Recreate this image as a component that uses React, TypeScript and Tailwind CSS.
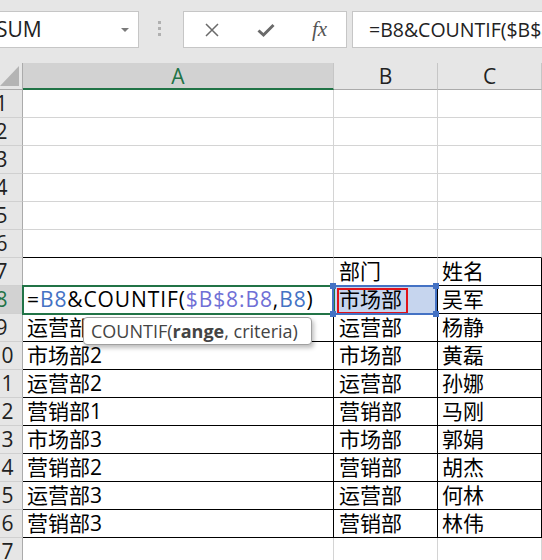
import { Fragment } from "react";

const FONT = { fontFamily: '"Open Sans", "Noto Sans CJK SC", sans-serif' };

const rows: [string, string, string][] = [
  ["", "", ""],
  ["", "", ""],
  ["", "", ""],
  ["", "", ""],
  ["", "", ""],
  ["", "", ""],
  ["", "部门", "姓名"],
  ["", "市场部", "吴军"],
  ["运营部1", "运营部", "杨静"],
  ["市场部2", "市场部", "黄磊"],
  ["运营部2", "运营部", "孙娜"],
  ["营销部1", "营销部", "马刚"],
  ["市场部3", "市场部", "郭娟"],
  ["营销部2", "营销部", "胡杰"],
  ["运营部3", "运营部", "何林"],
  ["营销部3", "营销部", "林伟"],
  ["", "", ""],
];

function Toolbar() {
  return (
    <div className="h-[63px] bg-[#e6e6e6] flex items-start pt-[11px] relative">
      <div className="ml-[-20px] w-[159px] h-[37px] bg-white border border-[#c6c6c6] flex items-center justify-between pl-[15px] pr-[9px]">
        <span className="text-[21px] text-[#222]">SUM</span>
        <span className="w-0 h-0 border-l-[4px] border-r-[4px] border-t-[4px] border-l-transparent border-r-transparent border-t-[#7a7a7a]" />
      </div>
      <div className="ml-[19px] mt-[10px] flex flex-col gap-[3px]">
        <span className="w-[3px] h-[3px] bg-[#b0b0b0]" />
        <span className="w-[3px] h-[3px] bg-[#b0b0b0]" />
        <span className="w-[3px] h-[3px] bg-[#b0b0b0]" />
      </div>
      <div className="ml-[22px] w-[164px] h-[37px] bg-white border border-[#c6c6c6] flex items-center">
        <svg className="ml-[20px]" width="16" height="16" viewBox="0 0 16 16">
          <path d="M2 2 L14 14 M14 2 L2 14" stroke="#6a6a6a" strokeWidth="1.5" />
        </svg>
        <svg className="ml-[37px]" width="18" height="16" viewBox="0 0 18 16">
          <path d="M1.5 8.5 L6.5 13 L16.5 3" stroke="#6a6a6a" strokeWidth="3" fill="none" />
        </svg>
        <span
          className="ml-[37px] text-[21px] italic text-[#555]"
          style={{ fontFamily: '"Liberation Serif", serif' }}
        >
          fx
        </span>
      </div>
      <div className="ml-[5px] flex-1 h-[37px] bg-white border border-[#c6c6c6] border-r-0 flex items-center pl-[16px] overflow-hidden whitespace-nowrap">
        <span className="text-[19.5px] text-[#222]">=B8&amp;COUNTIF($B$8:B8,B8)</span>
      </div>
    </div>
  );
}

function Formula() {
  return (
    <span className="tracking-[0.9px]">
      =<span className="text-[#4472c4]">B8</span>&amp;COUNTIF(
      <span className="text-[#6f6fd6]">$B$8:B8</span>,
      <span className="text-[#4472c4]">B8</span>)
    </span>
  );
}

export default function App() {
  return (
    <div className="w-[542px] h-[560px] overflow-hidden bg-white" style={FONT}>
      <Toolbar />
      {/* column headers */}
      <div className="flex h-[27px] bg-[#e6e6e6] text-[21px] leading-[26px]">
        <div className="w-[23px] border-r border-b border-[#ababab] relative">
          <svg className="absolute left-0 top-[3px]" width="20" height="21" viewBox="0 0 20 21">
            <polygon points="19,0 19,20 0,20" fill="#b4b4b4" />
          </svg>
        </div>
        <div className="w-[311px] bg-[#d2d2d2] border-b-2 border-[#217346] border-r border-r-[#c6c6c6] flex items-center justify-center text-[#217346]">
          A
        </div>
        <div className="w-[104px] border-b border-r border-[#ababab] border-r-[#c6c6c6] flex items-center justify-center text-[#222]">
          B
        </div>
        <div className="w-[104px] border-b border-r border-[#ababab] border-r-[#c6c6c6] flex items-center justify-center text-[#222]">
          C
        </div>
      </div>
      {/* grid */}
      {rows.map((r, i) => {
        const n = i + 1;
        const boxed = n >= 7 && n <= 16;
        const bottom = n >= 6 && n <= 16 ? "border-b-black" : "border-b-[#d4d4d4]";
        const rightA = n >= 8 && n <= 16 ? "border-r-black" : "border-r-[#d4d4d4]";
        const rightB = n >= 8 && n <= 16 ? "border-r-black" : "border-r-[#d4d4d4]";
        const rightC = boxed ? "border-r-black" : "border-r-[#d4d4d4]";
        const active = n === 8;
        return (
          <div key={n} className="flex h-[28px] text-[21px] leading-[27px]">
            <div
              className={`w-[23px] overflow-hidden border-r border-b border-r-[#ababab] border-b-[#d0d0d0] ${
                active ? "bg-[#d2d2d2] text-[#217346]" : "bg-[#e6e6e6] text-[#222]"
              }`}
            >
              <div className="w-[39px] ml-[-18px] text-center">{n}</div>
            </div>
            <div className={`w-[311px] border-r border-b ${rightA} ${bottom} relative flex items-end pl-[4px] text-black whitespace-nowrap`}>
              {active ? (
                <Fragment>
                  <Formula />
                  <div className="absolute -left-[1px] -top-[1px] -right-[2px] -bottom-[2px] border-2 border-[#217346] z-10" />
                  <div className="absolute left-[60px] top-[31px] w-[229px] h-[28px] bg-white border border-[#a0a0a0] rounded-[4px] shadow-[2px_3px_4px_rgba(0,0,0,0.25)] z-30 flex items-center pl-[7px] text-[18px] text-[#444] leading-none">
                    COUNTIF(<b className="font-bold">range</b>, criteria)
                  </div>
                </Fragment>
              ) : (
                r[0]
              )}
            </div>
            <div
              className={`w-[104px] border-r border-b ${rightB} ${bottom} relative flex items-end pl-[5px] text-black ${
                active ? "bg-[#c6d5ee]" : ""
              }`}
            >
              {r[1]}
              {active && (
                <Fragment>
                  <div className="absolute left-[3px] top-[2px] w-[71px] h-[26px] border-2 border-[#e0131a]" />
                  <div className="absolute -left-[2px] -top-[1px] right-0 -bottom-[2px] border-2 border-[#4472c4] z-20">
                    <span className="absolute -left-[4px] -top-[4px] w-[6px] h-[6px] bg-[#4472c4]" />
                    <span className="absolute -right-[4px] -top-[4px] w-[6px] h-[6px] bg-[#4472c4]" />
                    <span className="absolute -left-[4px] -bottom-[4px] w-[6px] h-[6px] bg-[#4472c4]" />
                    <span className="absolute -right-[4px] -bottom-[4px] w-[6px] h-[6px] bg-[#4472c4]" />
                  </div>
                </Fragment>
              )}
            </div>
            <div className={`w-[104px] border-r border-b ${rightC} ${bottom} flex items-end pl-[4px] text-black`}>
              {r[2]}
            </div>
          </div>
        );
      })}
    </div>
  );
}
